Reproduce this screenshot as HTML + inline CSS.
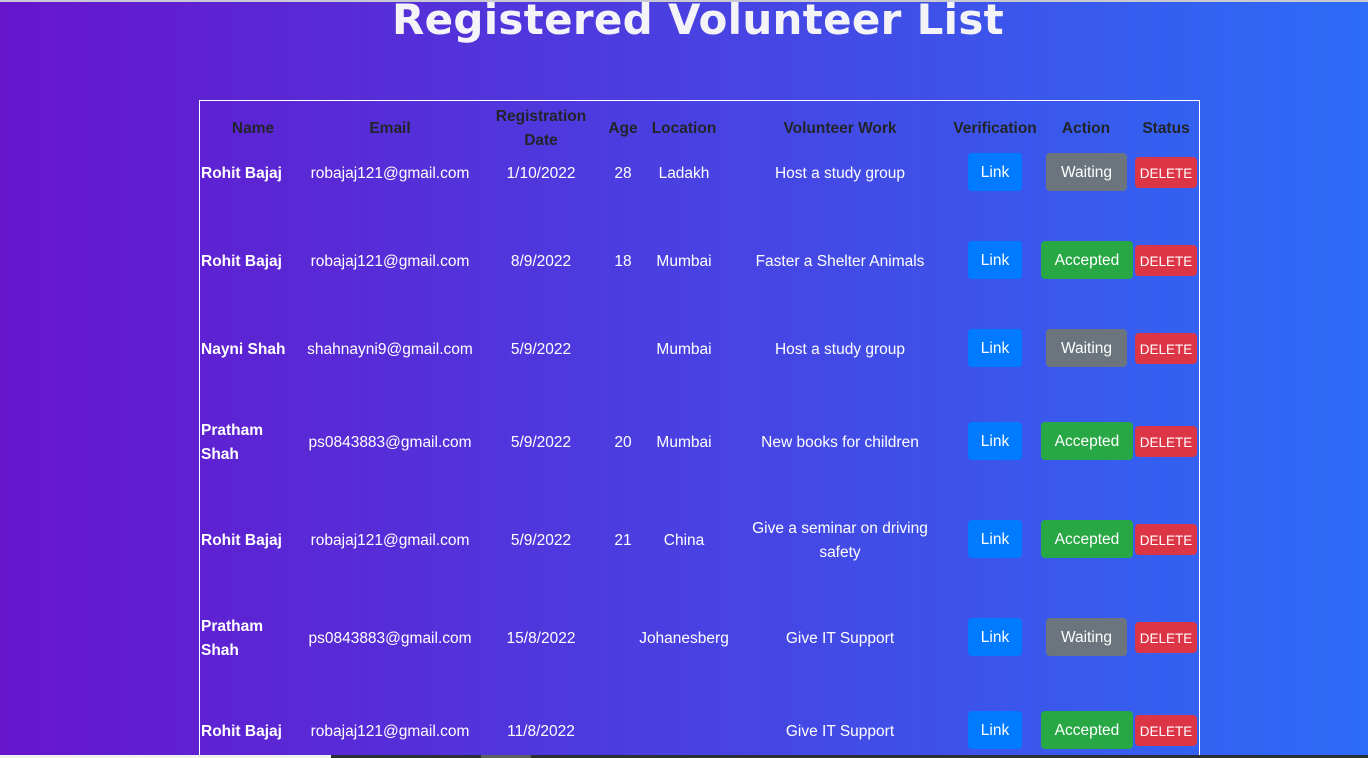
<!DOCTYPE html>
<html><head><meta charset="utf-8"><style>
html,body{margin:0;padding:0;width:1368px;height:758px;overflow:hidden}
body{background:linear-gradient(to right,#6715cc,#2c6cf6);font-family:"Liberation Sans",sans-serif;color:#fff;position:relative}
.top{position:absolute;left:0;top:0;width:1368px;height:2px;background:#c9c9d3}
h1{position:absolute;left:14px;width:1368px;top:-8px;margin:0;text-align:center;font-family:"DejaVu Sans",sans-serif;font-weight:bold;font-size:42px;letter-spacing:0.3px;color:#f4f4f8;line-height:56px}
.box{position:absolute;left:199px;top:100px;width:999px;height:680px;border:1px solid #fff}
.c{position:absolute;transform:translate(-50%,-50%);margin-top:2px;font-size:15.5px;text-align:center;white-space:nowrap;line-height:24px}
.h{font-weight:bold;color:#212529}
.n{position:absolute;left:201px;transform:translateY(-50%);margin-top:2px;font-weight:bold;font-size:15.5px;line-height:24px}
.b{position:absolute;border-radius:4px;font-size:15.5px;display:flex;align-items:center;justify-content:center;padding-top:2px;box-sizing:border-box}
.lk{background:#007bff;width:54px;height:38px;left:968px}
.wt{background:#6c757d;width:81px;height:38px;left:1046px}
.ac{background:#28a745;width:92px;height:38px;left:1041px}
.dl{background:#dc3545;width:62px;height:31px;left:1135px;font-size:13.5px}
.sb{position:absolute;top:755px;height:3px}
</style></head><body>
<div class="top"></div>
<h1>Registered Volunteer List</h1>
<div class="box"></div>

<div class="c h" style="left:253px;top:127px">Name</div>
<div class="c h" style="left:390px;top:127px">Email</div>
<div class="c h" style="left:541px;top:127px">Registration<br>Date</div>
<div class="c h" style="left:623px;top:127px">Age</div>
<div class="c h" style="left:684px;top:127px">Location</div>
<div class="c h" style="left:840px;top:127px">Volunteer Work</div>
<div class="c h" style="left:995px;top:127px">Verification</div>
<div class="c h" style="left:1086px;top:127px">Action</div>
<div class="c h" style="left:1166px;top:127px">Status</div>

<div class="n" style="top:172px">Rohit Bajaj</div>
<div class="c" style="left:390px;top:172px">robajaj121@gmail.com</div>
<div class="c" style="left:541px;top:172px">1/10/2022</div>
<div class="c" style="left:623px;top:172px">28</div>
<div class="c" style="left:684px;top:172px">Ladakh</div>
<div class="c" style="left:840px;top:172px">Host a study group</div>
<div class="b lk" style="top:153px">Link</div>
<div class="b wt" style="top:153px">Waiting</div>
<div class="b dl" style="top:157px">DELETE</div>

<div class="n" style="top:260px">Rohit Bajaj</div>
<div class="c" style="left:390px;top:260px">robajaj121@gmail.com</div>
<div class="c" style="left:541px;top:260px">8/9/2022</div>
<div class="c" style="left:623px;top:260px">18</div>
<div class="c" style="left:684px;top:260px">Mumbai</div>
<div class="c" style="left:840px;top:260px">Faster a Shelter Animals</div>
<div class="b lk" style="top:241px">Link</div>
<div class="b ac" style="top:241px">Accepted</div>
<div class="b dl" style="top:245px">DELETE</div>

<div class="n" style="top:348px">Nayni Shah</div>
<div class="c" style="left:390px;top:348px">shahnayni9@gmail.com</div>
<div class="c" style="left:541px;top:348px">5/9/2022</div>
<div class="c" style="left:684px;top:348px">Mumbai</div>
<div class="c" style="left:840px;top:348px">Host a study group</div>
<div class="b lk" style="top:329px">Link</div>
<div class="b wt" style="top:329px">Waiting</div>
<div class="b dl" style="top:333px">DELETE</div>

<div class="n" style="top:441px">Pratham<br>Shah</div>
<div class="c" style="left:390px;top:441px">ps0843883@gmail.com</div>
<div class="c" style="left:541px;top:441px">5/9/2022</div>
<div class="c" style="left:623px;top:441px">20</div>
<div class="c" style="left:684px;top:441px">Mumbai</div>
<div class="c" style="left:840px;top:441px">New books for children</div>
<div class="b lk" style="top:422px">Link</div>
<div class="b ac" style="top:422px">Accepted</div>
<div class="b dl" style="top:426px">DELETE</div>

<div class="n" style="top:539px">Rohit Bajaj</div>
<div class="c" style="left:390px;top:539px">robajaj121@gmail.com</div>
<div class="c" style="left:541px;top:539px">5/9/2022</div>
<div class="c" style="left:623px;top:539px">21</div>
<div class="c" style="left:684px;top:539px">China</div>
<div class="c" style="left:840px;top:539px">Give a seminar on driving<br>safety</div>
<div class="b lk" style="top:520px">Link</div>
<div class="b ac" style="top:520px">Accepted</div>
<div class="b dl" style="top:524px">DELETE</div>

<div class="n" style="top:637px">Pratham<br>Shah</div>
<div class="c" style="left:390px;top:637px">ps0843883@gmail.com</div>
<div class="c" style="left:541px;top:637px">15/8/2022</div>
<div class="c" style="left:684px;top:637px">Johanesberg</div>
<div class="c" style="left:840px;top:637px">Give IT Support</div>
<div class="b lk" style="top:618px">Link</div>
<div class="b wt" style="top:618px">Waiting</div>
<div class="b dl" style="top:622px">DELETE</div>

<div class="n" style="top:730px">Rohit Bajaj</div>
<div class="c" style="left:390px;top:730px">robajaj121@gmail.com</div>
<div class="c" style="left:541px;top:730px">11/8/2022</div>
<div class="c" style="left:840px;top:730px">Give IT Support</div>
<div class="b lk" style="top:711px">Link</div>
<div class="b ac" style="top:711px">Accepted</div>
<div class="b dl" style="top:715px">DELETE</div>

<div class="sb" style="left:0;width:331px;background:#f0f0f0"></div>
<div class="sb" style="left:331px;width:1037px;background:#2a2f3a"></div>
<div class="sb" style="left:481px;width:50px;background:#5a5f68"></div>
</body></html>
